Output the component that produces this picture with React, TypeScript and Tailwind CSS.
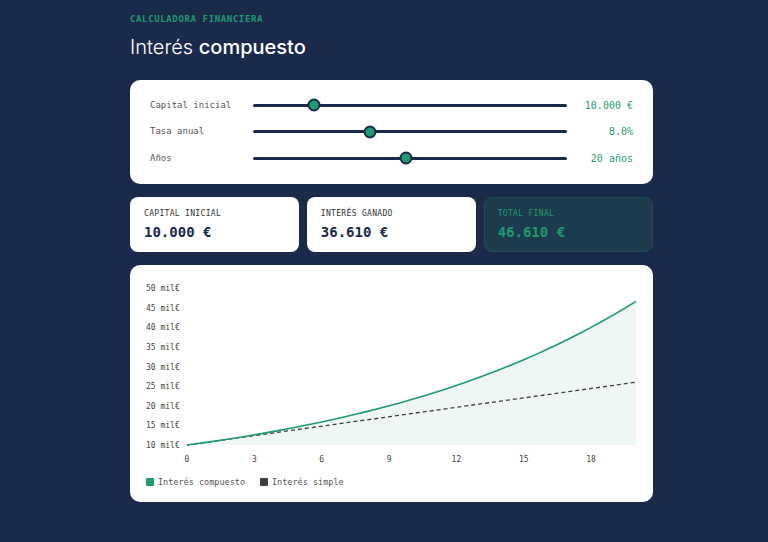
import React from "react";

const sliders = [
  { label: "Capital inicial", value: "10.000 €", pos: 0.194 },
  { label: "Tasa anual", value: "8.0%", pos: 0.373 },
  { label: "Años", value: "20 años", pos: 0.487 },
];

function Chart() {
  const W = 491;
  const H = 185;
  const x0 = 41;
  const px = 22.45;
  const yBase = 165;
  const pk = 3.925;
  const X = (t: number) => x0 + t * px;
  const Y = (k: number) => yBase - (k - 10) * pk;
  const pts: string[] = [];
  for (let t = 0; t <= 20.001; t += 0.5) {
    pts.push(`${X(t).toFixed(2)},${Y(10 * Math.pow(1.08, t)).toFixed(2)}`);
  }
  const line = "M" + pts.join(" L");
  const area = line + ` L${X(20)},${yBase} L${X(0)},${yBase} Z`;
  const yTicks = [50, 45, 40, 35, 30, 25, 20, 15, 10];
  const xTicks = [0, 3, 6, 9, 12, 15, 18];
  return (
    <svg width={W} height={H} viewBox={`0 0 ${W} ${H}`} className="block font-['DejaVu_Sans_Mono',monospace]">
      <path d={area} fill="#eef7f3" />
      <line x1={X(0)} y1={Y(10)} x2={X(20)} y2={Y(26)} stroke="#3b3f45" strokeWidth={1.3} strokeDasharray="4 3" />
      <path d={line} fill="none" stroke="#1f9a6e" strokeWidth={1.6} />
      {yTicks.map((v) => (
        <text key={v} x={0} y={Y(v) + 3} fontSize={8} fill="#444">
          {v} mil€
        </text>
      ))}
      {xTicks.map((t) => (
        <text key={t} x={X(t)} y={182} fontSize={8} fill="#444" textAnchor="middle">
          {t}
        </text>
      ))}
    </svg>
  );
}

function Stat({ label, value, accent }: { label: string; value: string; accent?: boolean }) {
  return (
    <div
      className={
        accent
          ? "h-[55px] flex-1 rounded-[8px] border border-[#234a55] bg-[#1c3b4c] px-[13px] pt-[10px]"
          : "h-[55px] flex-1 rounded-[8px] bg-white px-[14px] pt-[11px]"
      }
    >
      <div className={accent ? "text-[8px] tracking-[0.04em] text-[#1f9a6e]" : "text-[8px] tracking-[0.04em] text-[#333]"}>
        {label}
      </div>
      <div className={accent ? "mt-[2px] text-[14px] font-bold text-[#1f9a6e]" : "mt-[2px] text-[14px] font-bold text-[#1b2a4a]"}>
        {value}
      </div>
    </div>
  );
}

export default function App() {
  return (
    <div className="min-h-[542px] w-full bg-[#1b2a4a] font-['DejaVu_Sans_Mono','Liberation_Mono',monospace]">
      <div className="ml-[130px] w-[523px] pt-[14px]">
        <div className="text-[9px] font-bold leading-[11px] tracking-[0.07em] text-[#1f9a6e]">
          CALCULADORA FINANCIERA
        </div>
        <h1 className="mt-[10px] font-['Inter','Noto_Sans',sans-serif] text-[20px] leading-[24px] text-white">
          <span className="font-light">Interés</span> <span className="font-medium">compuesto</span>
        </h1>

        <div className="mt-[21px] rounded-[10px] bg-white px-5 py-3">
          {sliders.map((s) => (
            <div key={s.label} className="flex h-[26.5px] items-center">
              <div className="w-[103px] text-[9px] text-[#555]">{s.label}</div>
              <div className="relative h-[3px] flex-1 rounded-full bg-[#1b2a4a]">
                <div
                  className="absolute top-1/2 h-[13px] w-[13px] -translate-x-1/2 -translate-y-1/2 rounded-full border-2 border-[#1b2a4a] bg-[#1f9a6e]"
                  style={{ left: `${s.pos * 100}%` }}
                />
              </div>
              <div className="w-[66px] text-right text-[10px] text-[#1f9a6e]">{s.value}</div>
            </div>
          ))}
        </div>

        <div className="mt-[13px] flex gap-[7.5px]">
          <Stat label="CAPITAL INICIAL" value="10.000 €" />
          <Stat label="INTERÉS GANADO" value="36.610 €" />
          <Stat label="TOTAL FINAL" value="46.610 €" accent />
        </div>

        <div className="mt-[13px] h-[237px] rounded-[10px] bg-white pl-4 pt-[15px]">
          <Chart />
          <div className="mt-[11px] flex items-center text-[8.5px] text-[#555]">
            <span className="mr-[4px] h-[8px] w-[8px] rounded-[1px] bg-[#1f9a6e]" />
            <span>Interés compuesto</span>
            <span className="ml-[15px] mr-[4px] h-[8px] w-[8px] rounded-[1px] bg-[#3b3f45]" />
            <span>Interés simple</span>
          </div>
        </div>
      </div>
    </div>
  );
}
